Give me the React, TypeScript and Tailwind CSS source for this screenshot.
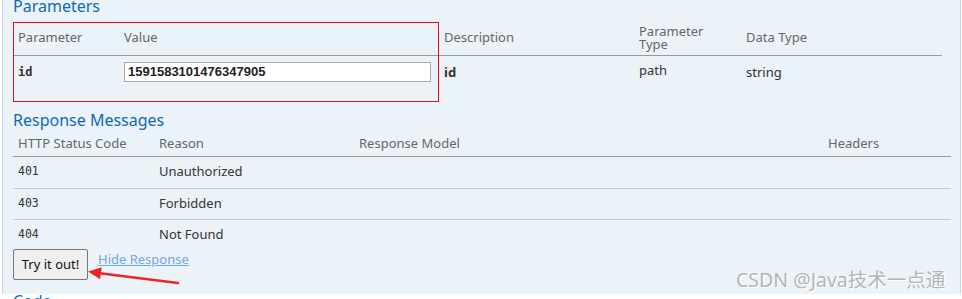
import React from 'react';

const sans = { fontFamily: '"Noto Sans", "Open Sans", sans-serif' };

const params = [{ name: 'id', value: '1591583101476347905', desc: 'id', type: 'path', dataType: 'string' }];

const messages = [
  { code: '401', reason: 'Unauthorized', h: 'h-[32px]' },
  { code: '403', reason: 'Forbidden', h: 'h-[31px]' },
  { code: '404', reason: 'Not Found', h: 'h-[31px]' },
];

function Arrow() {
  return (
    <svg className="absolute left-[83px] top-[262px]" width="100" height="26" viewBox="0 0 100 26">
      <line x1="95" y1="21" x2="15" y2="11" stroke="#e8262b" strokeWidth="2.5" strokeLinecap="round" />
      <path d="M5 9.5 L18.7 5.3 L17.1 17.2 Z" fill="#e8262b" />
    </svg>
  );
}

export default function App() {
  return (
    <div className="relative h-[299px] w-[962px] overflow-hidden bg-white" style={sans}>
      <div className="ml-[2px] h-full w-[959px] border-x border-[#c6d9ea] bg-[#ebf3f9] pl-[10px] pr-[10px]">
        <h4 className="-mt-[5px] text-[16px] leading-[22px] text-[#0f6ab4]">Parameters</h4>
        <table className="mt-[4px] w-[929px] border-collapse text-[13px]">
          <thead>
            <tr className="h-[34px] border-b border-[#999] text-[#666]">
              <th className="w-[106px] pl-[5px] text-left font-normal">Parameter</th>
              <th className="w-[320px] pl-[5px] text-left font-normal">Value</th>
              <th className="w-[195px] pl-[5px] text-left font-normal">Description</th>
              <th className="w-[107px] pl-[5px] text-left font-normal leading-[13px]">Parameter<br />Type</th>
              <th className="pl-[5px] text-left font-normal">Data Type</th>
            </tr>
          </thead>
          <tbody>
            {params.map((p) => (
              <tr key={p.name} className="h-[46px] align-top text-[#333]">
                <td className="pl-[5px] pt-[7px] font-['DejaVu_Sans_Mono',monospace] text-[12px] font-bold">{p.name}</td>
                <td className="pl-[5px] pt-[6px]">
                  <input
                    readOnly
                    value={p.value}
                    className="h-[20px] w-[307px] border border-[#aaa] bg-white px-[3px] font-['Liberation_Sans',sans-serif] text-[13px] font-bold text-[#222] outline-none"
                  />
                </td>
                <td className="pl-[5px] pt-[7px] font-bold">{p.desc}</td>
                <td className="pl-[5px] pt-[5px]">{p.type}</td>
                <td className="pl-[5px] pt-[7px]">{p.dataType}</td>
              </tr>
            ))}
          </tbody>
        </table>

        <h4 className="mt-[8px] text-[16px] leading-[22px] text-[#0f6ab4]">Response Messages</h4>
        <table className="w-[938px] border-collapse text-[13px]">
          <thead>
            <tr className="h-[25px] border-b border-[#999] text-[#666]">
              <th className="w-[146px] pl-[5px] text-left font-normal">HTTP Status Code</th>
              <th className="w-[200px] text-left font-normal">Reason</th>
              <th className="text-left font-normal">Response Model</th>
              <th className="w-[123px] text-left font-normal">Headers</th>
            </tr>
          </thead>
          <tbody>
            {messages.map((m, i) => (
              <tr key={m.code} className={`${m.h} text-[#333] ${i < messages.length - 1 ? 'border-b border-[#ccc]' : ''}`}>
                <td className="pl-[5px] font-['DejaVu_Sans_Mono',monospace] text-[11.5px]">{m.code}</td>
                <td>{m.reason}</td>
                <td></td>
                <td></td>
              </tr>
            ))}
          </tbody>
        </table>

        <div className="-mt-[1px] flex items-start gap-[10px]">
          <button className="h-[31px] w-[75px] rounded-[2px] border border-[#777] bg-[#efefef] text-[13px] text-[#111]">
            Try it out!
          </button>
          <a className="mt-[1px] text-[13px] text-[#72a8dc] underline">Hide Response</a>
        </div>
        <h4 className="mt-[10px] text-[16px] leading-[22px] text-[#0f6ab4]">Code</h4>
      </div>

      {/* annotation box */}
      <div className="absolute left-[13px] top-[22px] h-[80px] w-[426px] border border-[#e3101b]" />
      <Arrow />
      <div
        className="absolute left-[736px] top-[266px] text-[19.5px] leading-[28px] text-[#b5b5b5]"
        style={{ fontFamily: '"Noto Sans", "Noto Sans CJK SC", sans-serif', textShadow: '1px 1px 0 #fff' }}
      >
        CSDN @Java技术一点通
      </div>
    </div>
  );
}
